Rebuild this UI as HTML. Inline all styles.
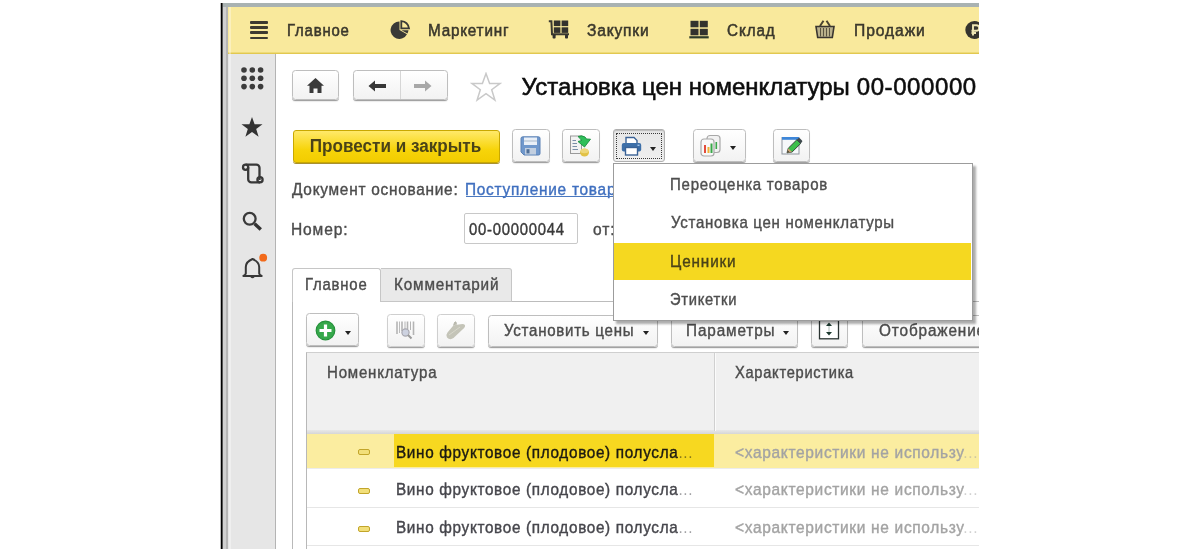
<!DOCTYPE html>
<html><head><meta charset="utf-8">
<style>
*{box-sizing:border-box;margin:0;padding:0}
html,body{width:1200px;height:552px;overflow:hidden;background:#fff;font-family:"Liberation Sans",sans-serif}
.a{position:absolute}
#clip{position:absolute;left:0;top:0;width:979px;height:549px;overflow:hidden;filter:blur(0.3px)}
.nt{position:absolute;font-size:17.2px;letter-spacing:-0.45px;color:#3f3d35;white-space:nowrap;line-height:20px;top:19px;-webkit-text-stroke:0.25px #3f3d35}
.btn{position:absolute;border:1px solid #bebebe;border-radius:3.5px;background:linear-gradient(#ffffff,#f2f2f2);box-shadow:0 1px 0 #a2a2a2,0 2px 1px rgba(0,0,0,0.08)}
.t{position:absolute;white-space:nowrap;line-height:20px;font-family:"Liberation Sans",sans-serif}
.tri{position:absolute;width:0;height:0;border-left:3.5px solid transparent;border-right:3.5px solid transparent;border-top:4px solid #333}
</style></head><body>
<div id="clip">
  <!-- frame -->
  <div class="a" style="left:220px;top:3px;width:1px;height:546px;background:#bbb"></div>
  <div class="a" style="left:221px;top:3px;width:1px;height:546px;background:#000"></div>
  <div class="a" style="left:222px;top:3px;width:1px;height:546px;background:#555"></div>
  <div class="a" style="left:223px;top:3px;width:2.5px;height:546px;background:#d0d0d0"></div>
  <div class="a" style="left:225.5px;top:3px;width:3px;height:546px;background:#b5b5b5"></div>
  <div class="a" style="left:223px;top:3px;width:756px;height:4px;background:#a9b2b2"></div>
  <!-- nav bar -->
  <div class="a" style="left:228px;top:7px;width:751px;height:46px;background:#f9e99c"></div>
  <div class="a" style="left:228px;top:52px;width:751px;height:1px;background:#eedb78"></div>
  <div class="a" style="left:228px;top:53px;width:751px;height:1px;background:#e2c850"></div>
  <!-- hamburger -->
  <div class="a" style="left:250px;top:21px;width:18px;height:2.6px;background:#3d3a30;border-radius:1px"></div>
  <div class="a" style="left:250px;top:26.2px;width:18px;height:2.6px;background:#3d3a30;border-radius:1px"></div>
  <div class="a" style="left:250px;top:31.3px;width:18px;height:2.6px;background:#3d3a30;border-radius:1px"></div>
  <div class="a" style="left:250px;top:36.5px;width:18px;height:2.6px;background:#3d3a30;border-radius:1px"></div>
  <!-- pie -->
  <svg class="a" style="left:390px;top:20px" width="21" height="20" viewBox="0 0 21 20">
    <path d="M9.5 1.5 A8.7 8.7 0 1 0 17 14.2 L9.5 10 Z" fill="#3a3a36"/>
    <path d="M11.3 1.2 A8.7 8.7 0 0 1 19 8.3 L11.3 8.3 Z" fill="none" stroke="#3a3a36" stroke-width="1.8"/>
    <path d="M11.5 10.3 L18.5 10.3 A8.7 8.7 0 0 1 17.5 13.4 Z" fill="#3a3a36"/>
  </svg>
  <!-- cart -->
  <svg class="a" style="left:548px;top:19px" width="23" height="21" viewBox="0 0 23 21">
    <path d="M0.8 2.3 L3.4 2.3 L4 15.2 L21 15.2" fill="none" stroke="#3a3830" stroke-width="2"/>
    <rect x="5.8" y="1.5" width="6.6" height="5.6" fill="#33322e"/>
    <rect x="13.6" y="1.5" width="6.6" height="5.6" fill="#33322e"/>
    <rect x="5.8" y="8.3" width="6.6" height="5.6" fill="#33322e"/>
    <rect x="13.6" y="8.3" width="6.6" height="5.6" fill="#33322e"/>
    <rect x="4.6" y="15.5" width="3" height="4" rx="0.8" fill="#33322e"/>
    <rect x="17" y="15.5" width="3" height="4" rx="0.8" fill="#33322e"/>
  </svg>
  <!-- warehouse -->
  <svg class="a" style="left:689px;top:20px" width="20" height="19" viewBox="0 0 20 19">
    <rect x="1.5" y="0.8" width="8" height="6.5" fill="#33322e"/>
    <rect x="10.8" y="0.8" width="8" height="6.5" fill="#33322e"/>
    <rect x="1.5" y="8.8" width="8" height="6.5" fill="#33322e"/>
    <rect x="10.8" y="8.8" width="8" height="6.5" fill="#33322e"/>
    <rect x="0.3" y="16.2" width="19.4" height="2.2" fill="#2e3a2a"/>
  </svg>
  <!-- basket -->
  <svg class="a" style="left:814px;top:20px" width="22" height="19" viewBox="0 0 22 19">
    <path d="M6 6 L9.5 0.8 M16 6 L12.5 0.8" stroke="#4a4430" stroke-width="2"/>
    <path d="M2 6.5 L20 6.5 L18.3 17.5 L3.7 17.5 Z" fill="#b9b08a" stroke="#3a3530" stroke-width="1.6"/>
    <path d="M6.5 8 V16.5 M9.5 8 V16.5 M12.5 8 V16.5 M15.5 8 V16.5" stroke="#5a5440" stroke-width="1"/>
  </svg>
  <!-- ruble circle -->
  <svg class="a" style="left:964px;top:20px" width="20" height="20" viewBox="0 0 20 20">
    <circle cx="10.3" cy="10" r="9" fill="#36342e"/>
    <path d="M9 15.5 V5.2 H12.3 Q15.2 5.2 15.2 8 Q15.2 10.8 12.3 10.8 H7.5 M7.5 13 H12" fill="none" stroke="#efe6b4" stroke-width="1.9"/>
  </svg>

  <!-- sidebar -->
  <div class="a" style="left:228px;top:54px;width:47px;height:495px;background:#e6e6e6"></div>
  <div class="a" style="left:275px;top:54px;width:1px;height:495px;background:#b4b4b4"></div>
  <div class="a" style="left:228.5px;top:7px;width:2.5px;height:542px;background:rgba(255,255,255,0.35)"></div>
  <!-- dots -->
  <svg class="a" style="left:240px;top:66px" width="25" height="25" viewBox="0 0 25 25">
    <g fill="#3c3c3c">
      <circle cx="4" cy="4" r="2.8"/><circle cx="12.3" cy="4" r="2.8"/><circle cx="20.6" cy="4" r="2.8"/>
      <circle cx="4" cy="12.3" r="2.8"/><circle cx="12.3" cy="12.3" r="2.8"/><circle cx="20.6" cy="12.3" r="2.8"/>
      <circle cx="4" cy="20.6" r="2.8"/><circle cx="12.3" cy="20.6" r="2.8"/><circle cx="20.6" cy="20.6" r="2.8"/>
    </g>
  </svg>
  <!-- star -->
  <svg class="a" style="left:240px;top:116px" width="24" height="22" viewBox="0 0 24 22">
    <path d="M12 1 L14.6 8.3 L22.5 8.3 L16.2 13 L18.6 20.7 L12 16 L5.4 20.7 L7.8 13 L1.5 8.3 L9.4 8.3 Z" fill="#333"/>
  </svg>
  <!-- scroll -->
  <svg class="a" style="left:238px;top:158px" width="30" height="30" viewBox="0 0 30 30">
    <g fill="none" stroke="#383838" stroke-width="2.3">
      <circle cx="7.6" cy="9.2" r="2.6"/>
      <path d="M7.6 6.6 H18.3 A3.2 3.2 0 0 1 21.5 9.8 V21.9"/>
      <path d="M10.2 9.2 V21.2 A3.2 3.2 0 0 0 13.4 24.4 H22"/>
      <circle cx="22" cy="21.8" r="2.6"/>
    </g>
  </svg>
  <!-- search -->
  <svg class="a" style="left:240px;top:209px" width="24" height="24" viewBox="0 0 24 24">
    <circle cx="9.7" cy="9.8" r="5.9" fill="none" stroke="#3a3a3a" stroke-width="2.3"/>
    <path d="M14.6 14.8 L20.8 20.6" stroke="#333" stroke-width="3.4" stroke-linecap="butt"/>
  </svg>
  <!-- bell -->
  <svg class="a" style="left:238px;top:250px" width="32" height="34" viewBox="0 0 32 34">
    <path d="M7.8 23.5 V17 Q7.8 11.8 14.5 9 Q21.2 11.8 21.2 17 V23.5 Q21.5 25 23.6 26 H5.4 Q7.5 25 7.8 23.5 Z" fill="none" stroke="#383838" stroke-width="2" stroke-linejoin="round"/>
    <path d="M12.3 27 Q14.5 29.6 16.7 27 Z" fill="#383838"/>
    <circle cx="25.2" cy="7.7" r="3.9" fill="#f26a1b"/>
  </svg>
  <!-- nav buttons -->
  <div class="btn" style="left:292px;top:70px;width:47px;height:30px"></div>
  <svg class="a" style="left:306px;top:77px" width="19" height="17" viewBox="0 0 19 17">
    <path d="M9.5 1 L18 8.8 L15.5 8.8 L15.5 16 L11.5 16 L11.5 11.5 L7.5 11.5 L7.5 16 L3.5 16 L3.5 8.8 L1 8.8 Z" fill="#3a3a3a"/>
  </svg>
  <div class="btn" style="left:353px;top:70px;width:95px;height:30px"></div>
  <div class="a" style="left:400px;top:71px;width:1px;height:28px;background:#d6d6d6"></div>
  <svg class="a" style="left:367px;top:79px" width="20" height="14" viewBox="0 0 20 14">
    <path d="M1.5 7 L8 1.5 L8 4.9 L19 4.9 L19 9.1 L8 9.1 L8 12.5 Z" fill="#383838"/>
  </svg>
  <svg class="a" style="left:413px;top:79px" width="20" height="14" viewBox="0 0 20 14">
    <path d="M18.5 7 L12 1.5 L12 4.9 L1 4.9 L1 9.1 L12 9.1 L12 12.5 Z" fill="#a8a8a8"/>
  </svg>
  <svg class="a" style="left:470px;top:72px" width="32" height="30" viewBox="0 0 32 30">
    <path d="M16 1.5 L19.6 11.4 L30.2 11.4 L21.7 17.7 L24.9 28 L16 21.7 L7.1 28 L10.3 17.7 L1.8 11.4 L12.4 11.4 Z" fill="#fff" stroke="#c9c9c9" stroke-width="1.5" stroke-linejoin="miter"/>
  </svg>
  <!-- title -->

  <!-- toolbar -->
  <div class="a" style="left:292.5px;top:129.5px;width:207px;height:33px;border:1px solid #c9a800;border-radius:3px;background:linear-gradient(#ffe96a,#f7d40a 60%,#f2cc00);box-shadow:0 1px 0 #a89030"></div>
  <div class="btn" style="left:511.5px;top:129px;width:38px;height:33px"></div>
  <svg class="a" style="left:520px;top:136px" width="21" height="20" viewBox="0 0 21 20">
    <path d="M3 0.8 H18.5 Q20 0.8 20 2.3 V17.5 Q20 19 18.5 19 H4 L1 16 V2.3 Q1 0.8 3 0.8 Z" fill="#7098cc" stroke="#5a80b4" stroke-width="1"/>
    <rect x="4" y="1.5" width="13" height="7.5" fill="#e9eff7"/>
    <rect x="4" y="4.5" width="13" height="1" fill="#aab9cc"/>
    <rect x="5" y="12" width="11" height="6.5" fill="#c2cfe0"/>
    <rect x="6.5" y="13.2" width="3" height="4.2" fill="#4f6f98"/>
  </svg>
  <div class="btn" style="left:561.5px;top:129px;width:38px;height:33px"></div>
  <svg class="a" style="left:569px;top:134px" width="24" height="24" viewBox="0 0 24 24">
    <rect x="1.5" y="2" width="11" height="17.5" fill="#f2f2f2" stroke="#9a9a9a" stroke-width="1"/>
    <path d="M3.5 6.5 H7 M3.5 9.5 H8 M3.5 12.5 H8 M3.5 15.5 H9" stroke="#7a8ea6" stroke-width="1"/>
    <ellipse cx="15.5" cy="18.5" rx="4.5" ry="4" fill="#e2c246"/>
    <ellipse cx="15.5" cy="17" rx="4" ry="2.2" fill="#eed77a"/>
    <path d="M9 2.5 Q13 1 16 3 L17.5 5 L21.5 5.2 L15.5 13 L9 7.5 L12.5 6.5 Q11.5 4.5 9 2.5 Z" fill="#2fbf5a" stroke="#1a8f3e" stroke-width="0.9"/>
  </svg>
  <!-- print pressed -->
  <div class="a" style="left:613px;top:129px;width:52px;height:33px;border:1px solid #b0b0b0;border-radius:3px;background:linear-gradient(#e6e6e6,#f0f0f0);box-shadow:inset 0 1px 1px #bbb"></div>
  <div class="a" style="left:616px;top:133px;width:46px;height:26px;border:1px dotted #3a3a3a"></div>
  <svg class="a" style="left:621px;top:136px" width="21" height="20" viewBox="0 0 21 20">
    <path d="M5 7 L5 1.5 L13 1.5 L16 4.5 L16 7" fill="#fff" stroke="#3a6296" stroke-width="1.4"/>
    <rect x="0.8" y="7" width="19.4" height="8.5" rx="2" fill="#3d6fa8"/>
    <rect x="4.5" y="11.5" width="12" height="7.5" fill="#fff" stroke="#3a6296" stroke-width="1.4"/>
    <rect x="16.5" y="8.6" width="2" height="1.3" fill="#aecbeb"/>
  </svg>
  <div class="tri" style="left:650px;top:146.5px;border-top-color:#222"></div>
  <div class="btn" style="left:692.5px;top:129px;width:53px;height:33px"></div>
  <svg class="a" style="left:699px;top:134px" width="24" height="23" viewBox="0 0 24 23">
    <rect x="8" y="1.5" width="13" height="17" rx="3" fill="#f2f2f2" stroke="#a8a8a8" stroke-width="1.2"/>
    <rect x="2" y="5" width="13" height="17" rx="3" fill="#f8f8f8" stroke="#a8a8a8" stroke-width="1.2"/>
    <rect x="5" y="11" width="2" height="8" fill="#e34b3b"/>
    <rect x="8.5" y="13" width="2" height="6" fill="#ecb13a"/>
    <rect x="11.5" y="9.5" width="2" height="9.5" fill="#3aa84a"/>
    <rect x="16.5" y="8" width="1.6" height="7" fill="#3aa84a"/>
  </svg>
  <div class="tri" style="left:730px;top:145.5px;border-top-color:#222"></div>
  <div class="btn" style="left:772.5px;top:129px;width:37px;height:33px"></div>
  <svg class="a" style="left:781px;top:136px" width="22" height="21" viewBox="0 0 22 21">
    <rect x="1" y="1.5" width="17" height="16.5" fill="#f6f8fa" stroke="#8d949c" stroke-width="1"/>
    <rect x="1" y="1" width="17" height="2.8" fill="#3d86d8"/>
    <path d="M6 16.8 L7.3 12.2 L15.8 3.8 L19.6 7.6 L11.1 16 Z" fill="#3cbf4c" stroke="#2a3a30" stroke-width="0.9"/>
    <path d="M15.8 3.8 L17.3 2.3 Q18 1.6 18.8 2.3 L21 4.5 Q21.7 5.3 21 6 L19.6 7.6 Z" fill="#3f4a4e"/>
    <path d="M6 16.8 L7.3 12.2 L11.1 16 Z" fill="#c8a070"/>
    <path d="M6 16.8 L6.7 14.5 L8.3 16.1 Z" fill="#333"/>
  </svg>

  <!-- form -->
  <div class="a" style="left:464px;top:213px;width:114px;height:31px;border:1px solid #c8c8c8;border-radius:2px;background:#fff"></div>

  <!-- tabs -->
  <div class="a" style="left:292px;top:301px;width:1px;height:248px;background:#b9b9b9"></div>
  <div class="a" style="left:511px;top:301px;width:468px;height:1px;background:#bcbcbc"></div>
  <div class="a" style="left:292px;top:268px;width:89px;height:34px;border:1px solid #c6c6c6;border-bottom:none;border-radius:3px 3px 0 0;background:#fff"></div>
  <div class="a" style="left:381px;top:268px;width:131px;height:34px;border:1px solid #c6c6c6;border-left:none;border-radius:0 3px 0 0;background:#e9e9e9"></div>

  <!-- tab toolbar -->
  <div class="btn" style="left:306px;top:313px;width:53px;height:33px"></div>
  <svg class="a" style="left:315px;top:320px" width="21" height="21" viewBox="0 0 21 21">
    <circle cx="10.5" cy="10.5" r="9.3" fill="#36a84b" stroke="#24913a" stroke-width="1.2"/>
    <path d="M10.5 4.5 V16.5 M4.5 10.5 H16.5" stroke="#fff" stroke-width="3.2"/>
  </svg>
  <div class="tri" style="left:344.5px;top:331px;border-top-color:#222"></div>
  <div class="btn" style="left:386.5px;top:313.5px;width:38px;height:33px;border-color:#cfcfcf"></div>
  <svg class="a" style="left:394px;top:319px" width="24" height="22" viewBox="0 0 24 22">
    <g stroke="#b4b4b4">
      <path d="M3 2.5 V15" stroke-width="1.6"/>
      <path d="M5.5 2.5 V14" stroke-width="0.9"/>
      <path d="M8 2.5 V12" stroke-width="1.6"/>
      <path d="M11 2.5 V11" stroke-width="1"/>
      <path d="M13.5 2.5 V10" stroke-width="1.6"/>
      <path d="M16.5 2.5 V11" stroke-width="1"/>
      <path d="M19.5 2.5 V16" stroke-width="1.6"/>
    </g>
    <circle cx="11.5" cy="13.5" r="3.6" fill="#cdd2e0" stroke="#a8a8b0" stroke-width="1.2"/>
    <path d="M14 16 L17.5 19.5" stroke="#9a9a9a" stroke-width="2"/>
  </svg>
  <div class="btn" style="left:436.5px;top:313.5px;width:38px;height:33px;border-color:#cfcfcf"></div>
  <svg class="a" style="left:444px;top:320px" width="24" height="22" viewBox="0 0 24 22">
    <path d="M3 17.5 Q1.5 15 3.5 12.5 L8.5 6.5 Q9.5 5 11 5 L18.5 4 Q21.5 4 21 6.5 Q20.5 8 18.5 9.5 L9.5 18 Q6 20.5 3 17.5 Z" fill="#c4c4b8"/>
    <path d="M9.5 5.5 L10.5 2.5 Q11 1.5 12 2 L12.5 4.5" fill="#bcbcb0" stroke="#b0b0a4" stroke-width="0.8"/>
    <path d="M5 15 L16 7" stroke="#d8d8cc" stroke-width="1"/>
  </svg>
  <div class="btn" style="left:487.5px;top:314.5px;width:170px;height:32px"></div>
  <div class="tri" style="left:643px;top:330.5px;border-top-color:#222"></div>
  <div class="btn" style="left:670.5px;top:314.5px;width:127px;height:32px"></div>
  <div class="tri" style="left:783px;top:330.5px;border-top-color:#222"></div>
  <div class="btn" style="left:811px;top:314.5px;width:37px;height:32px"></div>
  <svg class="a" style="left:818px;top:320px" width="22" height="20" viewBox="0 0 22 20">
    <rect x="1.5" y="0.5" width="19" height="18.3" fill="#fff" stroke="#2b3432" stroke-width="1.3"/>
    <path d="M11 2.5 L14 6 L8 6 Z M11 15.5 L14 12 L8 12 Z" fill="#1d3a30"/>
    <path d="M11 6 V12" stroke="#9aa8a4" stroke-width="0.8"/>
  </svg>
  <div class="btn" style="left:862px;top:314.5px;width:140px;height:32px"></div>

  <!-- table -->
  <div class="a" style="left:306px;top:352px;width:673px;height:197px;border-left:1px solid #b8b8b8;border-top:1px solid #cfcfcf"></div>
  <div class="a" style="left:307px;top:353px;width:672px;height:77px;background:#f0f0f0"></div>
  <div class="a" style="left:307px;top:430px;width:672px;height:4px;background:linear-gradient(#e8e8e8,#d6d6d6)"></div>
  <div class="a" style="left:714px;top:353px;width:1px;height:78px;background:#d0d0d0"></div>
  <div class="a" style="left:715px;top:353px;width:1px;height:78px;background:#fbfbfb"></div>
  <!-- rows -->
  <div class="a" style="left:307px;top:434px;width:672px;height:34px;background:#fbeda0"></div>
  <div class="a" style="left:394px;top:434px;width:320px;height:33px;background:#f7d820"></div>
  <div class="a" style="left:307px;top:468px;width:672px;height:1px;background:#ececec"></div>
  <div class="a" style="left:307px;top:507px;width:672px;height:1px;background:#e6e6e6"></div>
  <div class="a" style="left:307px;top:545px;width:672px;height:1px;background:#e6e6e6"></div>
  <div class="a" style="left:357.5px;top:449px;width:12px;height:6px;border:1.2px solid #c2a52a;border-radius:2px;background:#f2df7a"></div>
  <div class="a" style="left:357.5px;top:488px;width:12px;height:6px;border:1.2px solid #c2a52a;border-radius:2px;background:#f2df7a"></div>
  <div class="a" style="left:357.5px;top:526px;width:12px;height:6px;border:1.2px solid #c2a52a;border-radius:2px;background:#f2df7a"></div>

<div class="t" style="left:287.33px;top:20.00px;font-size:16.247px;color:#3b382c;transform:scale(0.920,1.047);transform-origin:0 15.63px;letter-spacing:0.872px;-webkit-text-stroke:0.55px #3b382c;">Главное</div>
<div class="t" style="left:427.70px;top:21.00px;font-size:16.587px;color:#3b382c;transform:scale(0.920,1.025);transform-origin:0 15.75px;letter-spacing:0.859px;-webkit-text-stroke:0.55px #3b382c;">Маркетинг</div>
<div class="t" style="left:587.47px;top:21.00px;font-size:16.954px;color:#3b382c;transform:scale(0.920,1.003);transform-origin:0 15.87px;letter-spacing:0.874px;-webkit-text-stroke:0.55px #3b382c;">Закупки</div>
<div class="t" style="left:727.22px;top:21.00px;font-size:16.539px;color:#3b382c;transform:scale(0.920,1.028);transform-origin:0 15.73px;letter-spacing:1.022px;-webkit-text-stroke:0.55px #3b382c;">Склад</div>
<div class="t" style="left:853.67px;top:21.00px;font-size:17.007px;color:#3b382c;transform:scale(0.920,1.000);transform-origin:0 15.89px;letter-spacing:0.996px;-webkit-text-stroke:0.55px #3b382c;">Продажи</div>
<div class="t" style="left:521.62px;top:77.00px;font-size:24.000px;color:#0d0d0d;transform:scale(1.000,0.999);transform-origin:0 18.32px;letter-spacing:0.021px;-webkit-text-stroke:0.55px #0d0d0d;">Установка цен номенклатуры</div>
<div class="t" style="left:856.75px;top:77.00px;font-size:24.000px;color:#0d0d0d;transform:scale(1.000,0.999);transform-origin:0 18.32px;letter-spacing:0.584px;-webkit-text-stroke:0.55px #0d0d0d;">00-000000</div>
<div class="t" style="left:309.73px;top:137.00px;font-size:17.115px;color:#4a4318;transform:scale(1.000,1.019);transform-origin:0 15.93px;font-weight:bold;">Провести и закрыть</div>
<div class="t" style="left:291.60px;top:180.00px;font-size:16.760px;color:#4c4c4c;transform:scale(0.920,1.015);transform-origin:0 15.81px;letter-spacing:0.794px;-webkit-text-stroke:0.4px #4c4c4c;">Документ основание:</div>
<div class="t" style="left:465.39px;top:180.00px;font-size:16.760px;color:#3f6fbf;transform:scale(0.920,1.015);transform-origin:0 15.81px;letter-spacing:0.794px;-webkit-text-stroke:0.4px #3f6fbf;">Поступление товаров</div>
<div class="t" style="left:291.08px;top:220.00px;font-size:16.910px;color:#4c4c4c;transform:scale(0.920,1.014);transform-origin:0 15.86px;letter-spacing:0.937px;-webkit-text-stroke:0.4px #4c4c4c;">Номер:</div>
<div class="t" style="left:468.50px;top:219.00px;font-size:16.152px;color:#3a3a3a;transform:scale(0.920,1.017);transform-origin:0 15.60px;letter-spacing:0.820px;-webkit-text-stroke:0.4px #3a3a3a;">00-00000044</div>
<div class="t" style="left:592.77px;top:220.00px;font-size:16.910px;color:#4c4c4c;transform:scale(0.920,1.006);transform-origin:0 15.86px;letter-spacing:0.937px;-webkit-text-stroke:0.4px #4c4c4c;">от:</div>
<div class="t" style="left:305.43px;top:274.00px;font-size:16.207px;color:#4c4c4c;transform:scale(0.920,1.058);transform-origin:0 15.62px;letter-spacing:0.870px;-webkit-text-stroke:0.4px #4c4c4c;">Главное</div>
<div class="t" style="left:393.70px;top:275.00px;font-size:16.635px;color:#4c4c4c;transform:scale(0.920,1.031);transform-origin:0 15.76px;letter-spacing:0.891px;-webkit-text-stroke:0.4px #4c4c4c;">Комментарий</div>
<div class="t" style="left:504.04px;top:320.00px;font-size:16.397px;color:#4c4c4c;transform:scale(0.920,1.037);transform-origin:0 15.68px;letter-spacing:0.798px;-webkit-text-stroke:0.4px #4c4c4c;">Установить цены</div>
<div class="t" style="left:686.20px;top:321.00px;font-size:16.667px;color:#4c4c4c;transform:scale(0.920,1.020);transform-origin:0 15.78px;letter-spacing:0.940px;-webkit-text-stroke:0.4px #4c4c4c;">Параметры</div>
<div class="t" style="left:879.22px;top:321.00px;font-size:16.667px;color:#4c4c4c;transform:scale(0.920,1.020);transform-origin:0 15.78px;letter-spacing:0.940px;-webkit-text-stroke:0.4px #4c4c4c;">Отображение</div>
<div class="t" style="left:327.32px;top:362.00px;font-size:16.342px;color:#4c4c4c;transform:scale(0.920,1.014);transform-origin:0 15.66px;letter-spacing:0.858px;-webkit-text-stroke:0.4px #4c4c4c;">Номенклатура</div>
<div class="t" style="left:735.35px;top:363.00px;font-size:15.920px;color:#4c4c4c;transform:scale(0.920,1.041);transform-origin:0 15.52px;letter-spacing:0.791px;-webkit-text-stroke:0.4px #4c4c4c;">Характеристика</div>
<div class="t" style="left:396.00px;top:443.00px;font-size:16.646px;color:#1c1a12;transform:scale(0.920,1.022);transform-origin:0 15.77px;letter-spacing:0.731px;-webkit-text-stroke:0.4px #1c1a12;">Вино фруктовое (плодовое) полусла<span style="opacity:0.5;-webkit-text-stroke-width:0">...</span></div>
<div class="t" style="left:734.81px;top:443.00px;font-size:16.851px;color:#a3a3a3;transform:scale(0.920,1.009);transform-origin:0 15.84px;letter-spacing:0.721px;-webkit-text-stroke:0.4px #a3a3a3;">&lt;характеристики не использу<span style="opacity:0.5;-webkit-text-stroke-width:0">...</span></div>
<div class="t" style="left:396.00px;top:480.00px;font-size:16.646px;color:#46464c;transform:scale(0.920,1.022);transform-origin:0 15.77px;letter-spacing:0.731px;-webkit-text-stroke:0.4px #46464c;">Вино фруктовое (плодовое) полусла<span style="opacity:0.5;-webkit-text-stroke-width:0">...</span></div>
<div class="t" style="left:734.81px;top:480.00px;font-size:16.851px;color:#a3a3a3;transform:scale(0.920,1.009);transform-origin:0 15.84px;letter-spacing:0.721px;-webkit-text-stroke:0.4px #a3a3a3;">&lt;характеристики не использу<span style="opacity:0.5;-webkit-text-stroke-width:0">...</span></div>
<div class="t" style="left:396.00px;top:518.00px;font-size:16.646px;color:#46464c;transform:scale(0.920,1.022);transform-origin:0 15.77px;letter-spacing:0.731px;-webkit-text-stroke:0.4px #46464c;">Вино фруктовое (плодовое) полусла<span style="opacity:0.5;-webkit-text-stroke-width:0">...</span></div>
<div class="t" style="left:734.81px;top:518.00px;font-size:16.851px;color:#a3a3a3;transform:scale(0.920,1.009);transform-origin:0 15.84px;letter-spacing:0.721px;-webkit-text-stroke:0.4px #a3a3a3;">&lt;характеристики не использу<span style="opacity:0.5;-webkit-text-stroke-width:0">...</span></div>
  <div class="a" style="left:466px;top:196px;width:150px;height:1.2px;background:#4a78c0"></div>
  <!-- popup menu -->
  <div class="a" style="left:616px;top:166px;width:360px;height:158px;background:rgba(0,0,0,0.32);filter:blur(1px)"></div>
  <div class="a" style="left:613px;top:163px;width:360px;height:158px;border:1px solid #9c9c9c;background:#fff"></div>
  <div class="a" style="left:614px;top:242.5px;width:357px;height:37.5px;background:#f5d820"></div>
<div class="t" style="left:669.52px;top:174.00px;font-size:16.355px;color:#4e4e4e;transform:scale(0.920,1.049);transform-origin:0 15.67px;letter-spacing:0.796px;-webkit-text-stroke:0.4px #4e4e4e;">Переоценка товаров</div>
<div class="t" style="left:670.54px;top:212.00px;font-size:16.350px;color:#4e4e4e;transform:scale(0.920,1.049);transform-origin:0 15.67px;letter-spacing:0.772px;-webkit-text-stroke:0.4px #4e4e4e;">Установка цен номенклатуры</div>
<div class="t" style="left:669.50px;top:252.00px;font-size:16.656px;color:#4a4318;transform:scale(0.920,1.030);transform-origin:0 15.77px;letter-spacing:0.922px;-webkit-text-stroke:0.4px #4a4318;">Ценники</div>
<div class="t" style="left:670.05px;top:290.00px;font-size:16.002px;color:#4e4e4e;transform:scale(0.920,1.072);transform-origin:0 15.54px;letter-spacing:0.806px;-webkit-text-stroke:0.4px #4e4e4e;">Этикетки</div>
</div>
</body></html>
